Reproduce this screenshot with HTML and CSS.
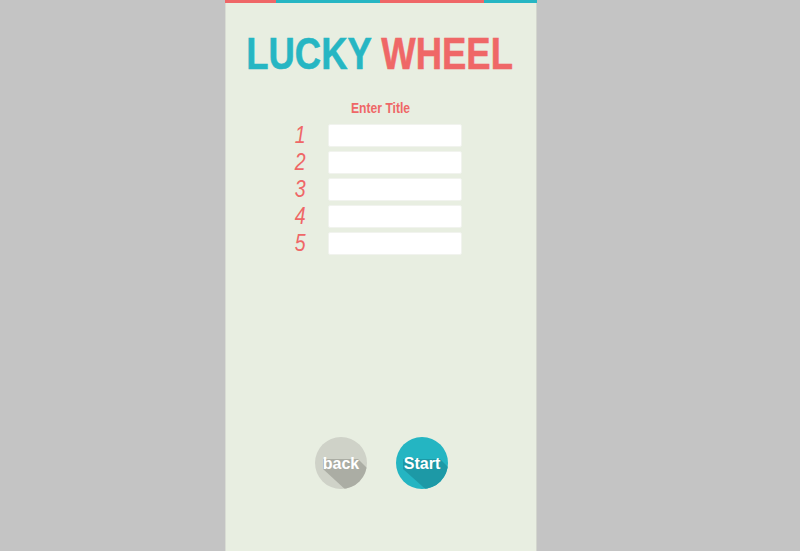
FILE: index.html
```html
<!DOCTYPE html>
<html lang="en">
<head>
<meta charset="utf-8">
<title>Lucky Wheel</title>
<link rel="stylesheet" href="styles.css">
</head>
<body>
<div class="stage">
  <main class="panel">
    <div class="stripe">
      <span class="seg coral s1"></span>
      <span class="seg teal s2"></span>
      <span class="seg coral s2"></span>
      <span class="seg teal s3"></span>
    </div>
    <h1 class="title"><span class="narrow"><span class="t-teal">LUCKY</span> <span class="t-coral">WHEEL</span></span></h1>
    <div class="label"><span class="narrow">Enter Title</span></div>
    <ol class="rows">
      <li class="row"><span class="num">1</span><input class="field" type="text"></li>
      <li class="row"><span class="num">2</span><input class="field" type="text"></li>
      <li class="row"><span class="num">3</span><input class="field" type="text"></li>
      <li class="row"><span class="num">4</span><input class="field" type="text"></li>
      <li class="row"><span class="num">5</span><input class="field" type="text"></li>
    </ol>
    <div class="actions">
      <button class="circle back" type="button"><span class="btn-text">back</span></button>
      <button class="circle start" type="button"><span class="btn-text">Start</span></button>
    </div>
  </main>
</div>
</body>
</html>
```
FILE: styles.css
```css
html, body {
  margin: 0;
  padding: 0;
  height: 100%;
  background: #c4c4c4;
}

.stage {
  height: 551px;
  padding-left: 225px;
  display: flex;
}

.panel {
  width: 310px;
  height: 551px;
  background: #e8eee1;
  border-left: 1px solid #d9dcd4;
  border-right: 1px solid #d3d6ce;
  display: flex;
  flex-direction: column;
  align-items: stretch;
  font-family: "Liberation Sans", Arial, sans-serif;
}

.stripe {
  display: flex;
  height: 3px;
  margin-left: -1px;
  margin-right: -1px;
}
.seg { display: block; height: 100%; }
.s1 { width: 51px; }
.s2 { width: 104px; }
.s3 { flex: 1; }
.coral { background: #ef6767; }
.teal { background: #26b6c3; }

.narrow {
  display: inline-block;
  white-space: nowrap;
  transform: scaleX(0.81);
  transform-origin: center;
  flex: none;
}

.title {
  margin: 28px 0 0;
  font-size: 45px;
  line-height: 45px;
  font-weight: bold;
  display: flex;
  justify-content: center;
  white-space: nowrap;
  padding-right: 3px;
  -webkit-text-stroke: 0.6px currentColor;
}
.t-teal { color: #26b6c3; }
.t-coral { color: #ef6767; }

.label {
  margin-top: 24px;
  font-size: 15px;
  line-height: 15px;
  font-weight: bold;
  color: #ef6767;
  display: flex;
  justify-content: center;
}

.rows {
  list-style: none;
  margin: 9px 0 0;
  padding: 0 0 0 67px;
  display: flex;
  flex-direction: column;
  gap: 4px;
}
.row {
  display: flex;
  align-items: center;
  height: 23px;
}
.num {
  display: inline-block;
  width: 35px;
  font-size: 23px;
  line-height: 23px;
  font-style: italic;
  color: #ef6767;
  transform: scaleX(0.85);
  transform-origin: left center;
  padding-left: 2px;
  box-sizing: border-box;
}
.field {
  width: 134px;
  height: 23px;
  box-sizing: border-box;
  margin: 0;
  padding: 0 6px;
  border: 1px solid #f1f3ee;
  border-radius: 2px;
  background: #ffffff;
  outline: none;
}

.actions {
  margin-top: 182px;
  display: flex;
  justify-content: center;
  gap: 29px;
  padding-left: 1px;
}
.circle {
  position: relative;
  width: 52px;
  height: 52px;
  border-radius: 50%;
  border: none;
  padding: 0;
  overflow: hidden;
  display: flex;
  align-items: center;
  justify-content: center;
  font-family: "Liberation Sans", Arial, sans-serif;
  font-weight: bold;
  font-size: 16px;
  color: #ffffff;
  cursor: pointer;
}
.circle::before {
  content: "";
  position: absolute;
  left: 0;
  top: 0;
  width: 52px;
  height: 52px;
}
.back { background: #cfd2c8; }
.back::before {
  background: #abada4;
  clip-path: polygon(8px 22px, 43px 22px, 78px 57px, 45px 66px, 8px 32px);
}
.start { background: #24b5c2; }
.start::before {
  background: #1d99a6;
  clip-path: polygon(7px 22px, 44px 22px, 78px 56px, 45px 66px, 7px 32px);
}
.btn-text {
  position: relative;
  line-height: 16px;
  margin-top: 1px;
}
```
